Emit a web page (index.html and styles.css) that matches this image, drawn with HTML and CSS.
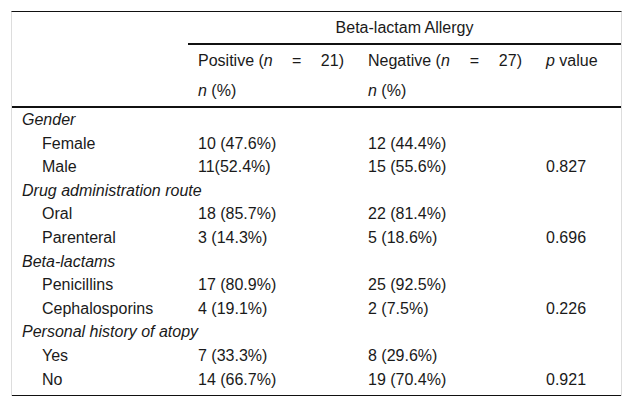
FILE: index.html
```html
<!DOCTYPE html>
<html lang="en">
<head>
<meta charset="utf-8">
<title>Beta-lactam Allergy</title>
<link rel="stylesheet" href="styles.css">
</head>
<body>
<div class="page">
  <table class="stats">
    <colgroup>
      <col class="c-label">
      <col class="c-pos">
      <col class="c-neg">
      <col class="c-p">
    </colgroup>
    <thead>
      <tr class="head-top">
        <th class="blank"></th>
        <th colspan="3" class="group">Beta-lactam Allergy</th>
      </tr>
      <tr class="head-sub">
        <th class="blank"></th>
        <th class="sub">
          <div class="spread pos"><span>Positive (<i>n</i></span><span>=</span><span>21)</span></div>
          <div><i>n</i> (%)</div>
        </th>
        <th class="sub">
          <div class="spread neg"><span>Negative (<i>n</i></span><span>=</span><span>27)</span></div>
          <div><i>n</i> (%)</div>
        </th>
        <th class="sub"><i>p</i> value</th>
      </tr>
    </thead>
    <tbody>
      <tr class="cat"><td colspan="4"><i>Gender</i></td></tr>
      <tr><td class="item">Female</td><td>10 (47.6%)</td><td>12 (44.4%)</td><td></td></tr>
      <tr><td class="item">Male</td><td>11(52.4%)</td><td>15 (55.6%)</td><td>0.827</td></tr>
      <tr class="cat"><td colspan="4"><i>Drug administration route</i></td></tr>
      <tr><td class="item">Oral</td><td>18 (85.7%)</td><td>22 (81.4%)</td><td></td></tr>
      <tr><td class="item">Parenteral</td><td>3 (14.3%)</td><td>5 (18.6%)</td><td>0.696</td></tr>
      <tr class="cat"><td colspan="4"><i>Beta-lactams</i></td></tr>
      <tr><td class="item">Penicillins</td><td>17 (80.9%)</td><td>25 (92.5%)</td><td></td></tr>
      <tr><td class="item">Cephalosporins</td><td>4 (19.1%)</td><td>2 (7.5%)</td><td>0.226</td></tr>
      <tr class="cat"><td colspan="4"><i>Personal history of atopy</i></td></tr>
      <tr><td class="item">Yes</td><td>7 (33.3%)</td><td>8 (29.6%)</td><td></td></tr>
      <tr class="last"><td class="item">No</td><td>14 (66.7%)</td><td>19 (70.4%)</td><td>0.921</td></tr>
    </tbody>
  </table>
</div>
</body>
</html>
```

FILE: styles.css
```css
html, body {
  margin: 0;
  padding: 0;
  background: #ffffff;
}

.page {
  padding: 11px 0 0 11px;
  font-family: "Liberation Sans", Arial, sans-serif;
  font-size: 16px;
  color: #1a1a1a;
}

.stats {
  border-collapse: separate;
  border-spacing: 0;
  table-layout: fixed;
  width: 611px;
  border-top: 1px solid #111111;
  border-left: 1px solid #dddddd;
  border-right: 1px solid #dddddd;
}

.c-label { width: 176px; }
.c-pos { width: 170px; }
.c-neg { width: 178px; }
.c-p { width: 85px; }

.stats th {
  font-weight: normal;
  text-align: left;
  padding: 0 0 0 10px;
}

.head-top th {
  height: 31px;
  line-height: 31px;
  padding: 0;
}

.head-top .group {
  text-align: center;
  border-bottom: 2px solid #111111;
}

.head-sub th {
  vertical-align: top;
  line-height: 30px;
  padding-top: 1px;
  height: 60px;
  box-sizing: content-box;
  border-bottom: 2px solid #111111;
}

.head-sub .blank {
  padding: 0;
}

.spread {
  display: flex;
  justify-content: space-between;
}

.spread.pos { width: 146px; }
.spread.neg { width: 154px; }

.stats td {
  padding: 0 0 0 10px;
  line-height: 23.6px;
  white-space: nowrap;
}

.stats .cat td {
  padding-left: 10px;
}

.stats td.item {
  padding-left: 30px;
}

.stats .last td {
  padding-bottom: 4px;
  border-bottom: 1px solid #111111;
}
```
